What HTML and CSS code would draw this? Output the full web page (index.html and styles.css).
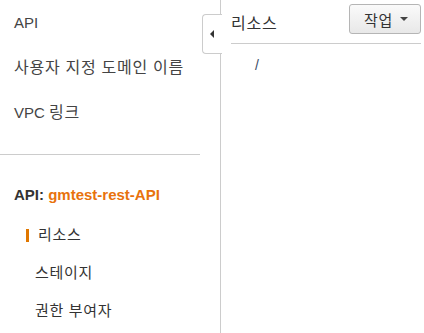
FILE: index.html
```html
<!DOCTYPE html>
<html lang="ko">

<head>
  <meta charset="UTF-8">
  <title>API Gateway - 리소스</title>
  <link rel="stylesheet" href="styles.css">
</head>

<body>
  <div class="layout">
    <nav class="sidebar">
      <ul class="nav-top">
        <li>API</li>
        <li><span class="ko">사용자 지정 도메인 이름</span></li>
        <li>VPC <span class="ko">링크</span></li>
      </ul>

      <div class="api-name">API: <span class="api-title">gmtest-rest-API</span></div>
      <ul class="nav-sub">
        <li class="active"><span class="ko">리소스</span></li>
        <li><span class="ko">스테이지</span></li>
        <li><span class="ko">권한 부여자</span></li>
      </ul>
    </nav>

    <div class="gutter">
      <button class="collapse" aria-label="collapse"><span class="arrow-left"></span></button>
    </div>

    <main class="main">
      <div class="main-header">
        <h2><span class="ko">리소스</span></h2>
        <button class="btn-action"><span class="ko">작업</span> <span class="caret"></span></button>
      </div>
      <div class="tree">
        <div class="tree-node">/</div>
      </div>
    </main>
  </div>
</body>

</html>
```

FILE: styles.css
```css
* {
  box-sizing: border-box;
}

body {
  margin: 0;
  font-family: "Liberation Sans", "Noto Sans CJK KR", sans-serif;
  color: #444;
  background-color: #fff;
}

ul {
  list-style: none;
  margin: 0;
  padding: 0;
}

/* hangul in Noto CJK is narrower than the original font */
.ko {
  font-size: 1.07em;
  letter-spacing: .7px;
}

.layout {
  display: flex;
  height: 100vh;
}

/* SIDEBAR */

.sidebar {
  width: 200px;
  flex: none;
}

.nav-top {
  padding-top: 1px;
  padding-bottom: 19px;
  border-bottom: 1px solid #ccc;
}

.nav-top li {
  padding-left: 14px;
  font-size: 15px;
  line-height: 44px;
}

.api-name {
  margin-top: 30px;
  padding-left: 14px;
  font-size: 15px;
  font-weight: bold;
  line-height: 20px;
  color: #333;
}

.api-title {
  color: #e8720c;
}

.nav-sub {
  margin-top: 11px;
}

.nav-sub li {
  padding-left: 35px;
  font-size: 14px;
  line-height: 38px;
  color: #333;
}

.nav-sub li.active {
  display: flex;
  align-items: center;
  padding-left: 26px;
}

.nav-sub li.active::before {
  content: "";
  width: 3px;
  height: 13px;
  margin-right: 9px;
  background-color: #e07700;
}

/* GUTTER + TOGGLE */

.gutter {
  position: relative;
  width: 21px;
  flex: none;
  border-right: 1px solid #ccc;
}

.collapse {
  position: absolute;
  top: 14px;
  left: 2px;
  width: 20px;
  height: 40px;
  padding: 0;
  border: 1px solid #ccc;
  border-right: 0 none;
  border-radius: 4px 0 0 4px;
  background-color: #fff;
  cursor: pointer;
}

.arrow-left {
  display: block;
  width: 0;
  height: 0;
  margin-left: 7px;
  border-top: 4px solid transparent;
  border-bottom: 4px solid transparent;
  border-right: 4px solid #333;
}

/* MAIN */

.main {
  flex: 1;
  padding: 0 3px 0 10px;
}

.main-header {
  display: flex;
  justify-content: space-between;
  align-items: flex-start;
  height: 44px;
  padding-top: 4px;
  border-bottom: 1px solid #ccc;
}

.main-header h2 {
  margin: 4px 0 0;
  font-size: 15px;
  font-weight: normal;
  line-height: 30px;
  color: #333;
}

.btn-action {
  display: flex;
  align-items: center;
  justify-content: center;
  gap: 7px;
  width: 72px;
  height: 30px;
  padding: 0 0 0 2px;
  font-family: inherit;
  font-size: 14px;
  color: #333;
  border: 1px solid #b5b5b5;
  border-radius: 3px;
  background: linear-gradient(#fafafa, #e8e8e8);
  cursor: pointer;
}

.caret {
  width: 0;
  height: 0;
  border-left: 4px solid transparent;
  border-right: 4px solid transparent;
  border-top: 4px solid #444;
}

.tree {
  padding: 13px 0 0 24px;
}

.tree-node {
  font-size: 14px;
  line-height: 16px;
  color: #3b4a66;
}
```
